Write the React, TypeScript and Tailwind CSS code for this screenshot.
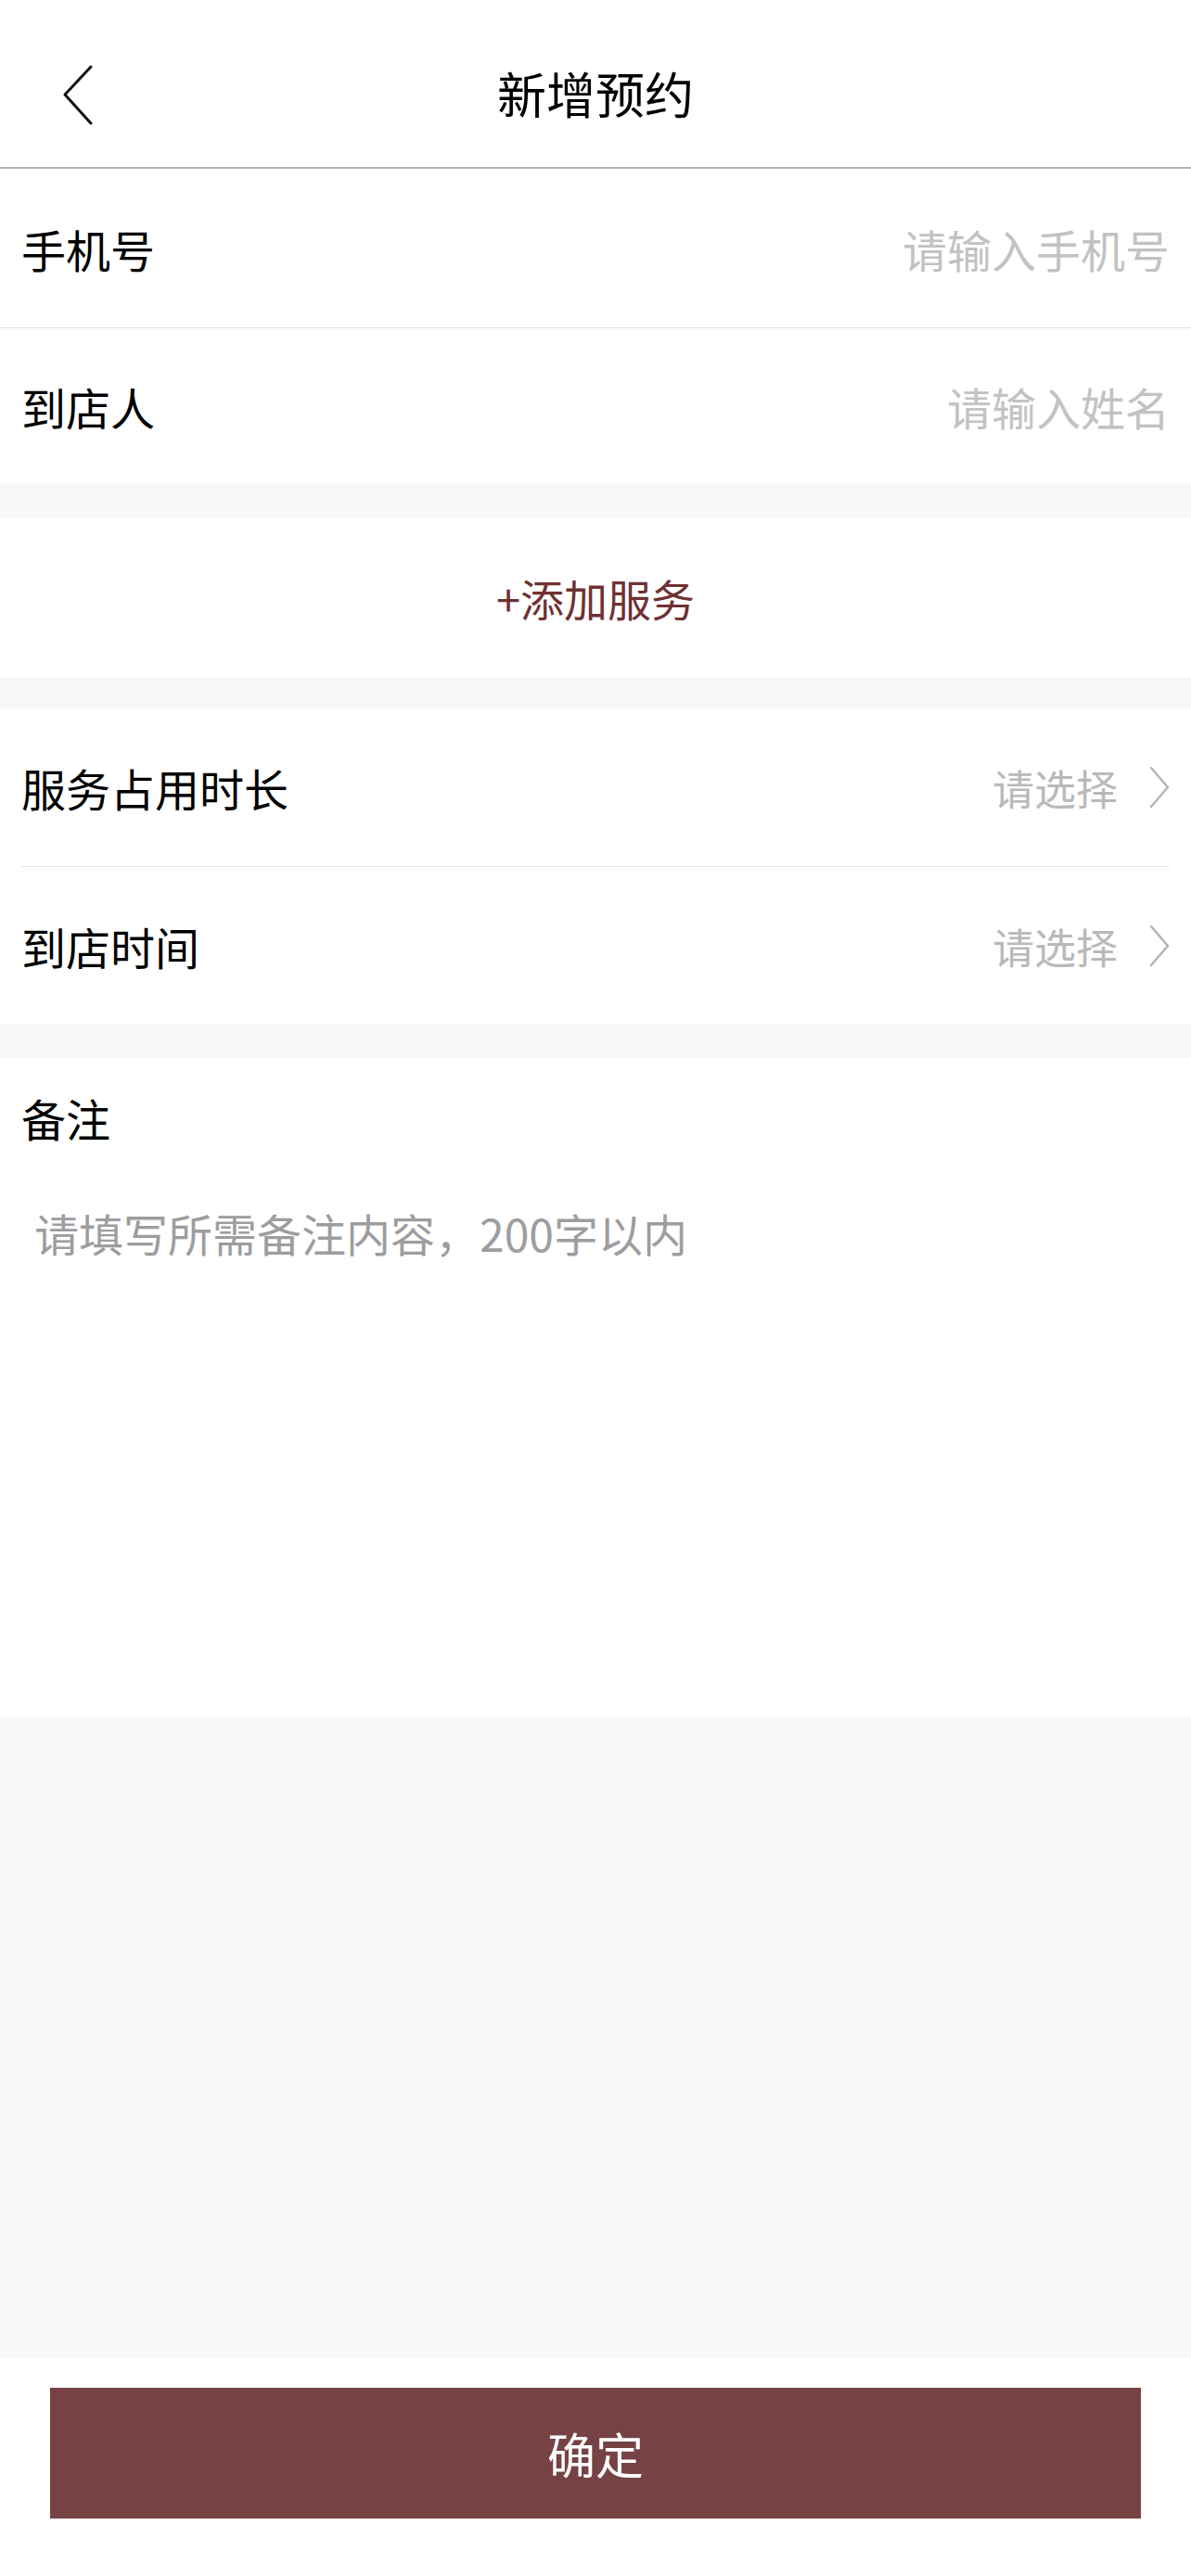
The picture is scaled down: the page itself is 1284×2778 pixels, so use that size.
import React from 'react';

const font = { fontFamily: '"Noto Sans CJK SC", "Noto Sans", sans-serif' };

function ChevronRight() {
  return (
    <svg width="22" height="46" viewBox="0 0 22 46" fill="none" className="shrink-0">
      <polyline points="2,2 20,23 2,44" stroke="#b4b4b4" strokeWidth="2.5" strokeLinecap="round" strokeLinejoin="round" />
    </svg>
  );
}

function InputRow({ label, placeholder, className }: { label: string; placeholder: string; className: string }) {
  return (
    <div className={`flex items-center justify-between px-[23px] bg-white ${className}`}>
      <span className="text-[48px] text-black leading-none">{label}</span>
      <input
        className="text-right text-[48px] leading-none outline-none bg-transparent placeholder:text-[#c2c2c4] w-[600px]"
        placeholder={placeholder}
        style={font}
      />
    </div>
  );
}

function SelectRow({ label, className }: { label: string; className: string }) {
  return (
    <div className={`flex items-center justify-between ${className}`}>
      <span className="text-[48px] text-black leading-none">{label}</span>
      <div className="flex items-center gap-[34px]">
        <span className="text-[45px] text-[#b9b9bb] leading-none">请选择</span>
        <ChevronRight />
      </div>
    </div>
  );
}

export default function App() {
  return (
    <div className="h-screen w-full flex flex-col bg-[#f8f8fa]" style={font}>
      <header className="h-[182px] shrink-0 bg-white border-b-2 border-[#b5b5b5] relative flex items-center justify-center">
        <svg
          width="34"
          height="66"
          viewBox="0 0 34 66"
          fill="none"
          className="absolute left-[67px] top-[70px]"
        >
          <polyline points="31,2 3,32 31,63" stroke="#111" strokeWidth="3" strokeLinecap="round" strokeLinejoin="round" />
        </svg>
        <h1 className="text-[53px] text-black leading-none mt-[20px]">新增预约</h1>
      </header>

      <InputRow label="手机号" placeholder="请输入手机号" className="h-[172px] shrink-0 border-b border-[#e4e4e6]" />
      <InputRow label="到店人" placeholder="请输入姓名" className="h-[168px] shrink-0" />

      <div className="h-[36px] shrink-0" />

      <div className="h-[172px] shrink-0 bg-white flex items-center justify-center">
        <span className="text-[47px] text-[#6f3134] leading-none">+添加服务</span>
      </div>

      <div className="h-[34px] shrink-0" />

      <div className="bg-white shrink-0 px-[23px]">
        <SelectRow label="服务占用时长" className="h-[171px] border-b border-[#e4e4e6]" />
        <SelectRow label="到店时间" className="h-[170px]" />
      </div>

      <div className="h-[36px] shrink-0" />

      <div className="h-[710px] shrink-0 bg-white px-[23px] pt-[40px] flex flex-col">
        <span className="text-[48px] text-black leading-none">备注</span>
        <textarea
          className="mt-[70px] ml-[14px] flex-1 resize-none outline-none text-[48px] leading-tight placeholder:text-[#9d9d9f]"
          placeholder="请填写所需备注内容，200字以内"
          style={font}
        />
      </div>

      <div className="flex-1" />

      <div className="h-[235px] shrink-0 bg-white px-[54px] pt-[32px]">
        <button
          type="button"
          className="w-full h-[141px] bg-[#774243] text-white text-[52px] leading-none"
          style={font}
        >
          确定
        </button>
      </div>
    </div>
  );
}
